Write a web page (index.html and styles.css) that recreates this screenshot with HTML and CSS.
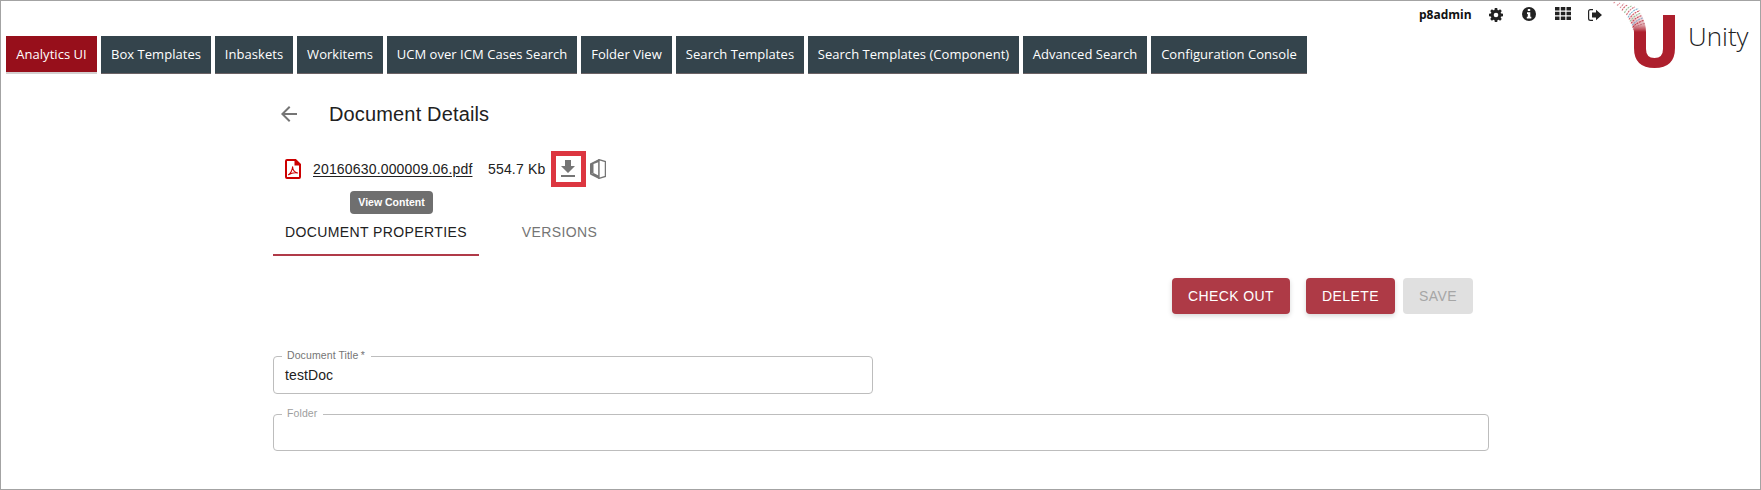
FILE: index.html
```html
<!DOCTYPE html>
<html lang="en">
<head>
<meta charset="utf-8">
<title>Document Details</title>
<link rel="stylesheet" href="styles.css">
</head>
<body>
<div class="app">
  <header class="top">
    <nav class="nav">
      <a class="nav-item active">Analytics UI</a>
      <a class="nav-item">Box Templates</a>
      <a class="nav-item">Inbaskets</a>
      <a class="nav-item">Workitems</a>
      <a class="nav-item">UCM over ICM Cases Search</a>
      <a class="nav-item">Folder View</a>
      <a class="nav-item">Search Templates</a>
      <a class="nav-item">Search Templates (Component)</a>
      <a class="nav-item">Advanced Search</a>
      <a class="nav-item">Configuration Console</a>
    </nav>
    <div class="user">
      <span class="user-name">p8admin</span>
      <svg class="gear" width="14" height="14" viewBox="0 0 14 14"><g fill="#222"><circle cx="7" cy="7" r="5.2"/><path d="M5.8 0h2.4l.5 3H5.3zM5.8 14h2.4l.5-3H5.3zM0 5.8v2.4l3 .5V5.3zM14 5.8v2.4l-3 .5V5.3z"/><path transform="rotate(45 7 7)" d="M5.8 0h2.4l.5 3H5.3zM5.8 14h2.4l.5-3H5.3zM0 5.8v2.4l3 .5V5.3zM14 5.8v2.4l-3 .5V5.3z"/></g><circle cx="7" cy="7" r="2.3" fill="#fff"/></svg>
      <svg class="info" width="14" height="14" viewBox="0 0 14 14"><circle cx="7" cy="7" r="7" fill="#222"/><path d="M5.8 2h2.4v2H5.8zM5 5.2h3.3v4.6h1v1.7H4.8V9.8h1V6.900H5z" fill="#fff"/></svg>
      <svg class="grid" width="16" height="13" viewBox="0 0 16 13"><path d="M0 0h4.500v3.500H0zM5.800 0h4.500v3.500H5.800zM11.500 0H16v3.500h-4.500zM0 4.750h4.500v3.500H0zM5.800 4.750h4.500v3.500H5.800zM11.500 4.750H16v3.500h-4.500zM0 9.500h4.500V13H0zM5.800 9.500h4.500V13H5.800zM11.500 9.500H16V13h-4.500z" fill="#222"/></svg>
      <svg class="exit" width="14" height="12" viewBox="0 0 14 12"><path d="M5 .6H2.500Q.6.600.6 2.500v7q0 1.900 1.900 1.900H5" fill="none" stroke="#222" stroke-width="1.200"/><path d="M4 3.500h4V.8L14 6l-6 5.200V8.500H4z" fill="#222"/></svg>
    </div>
    <div class="brand">
      <svg width="64" height="68" viewBox="0 0 64 68">
        <defs>
          <linearGradient id="fade" x1="0" y1="12" x2="0" y2="31" gradientUnits="userSpaceOnUse"><stop offset="0" stop-color="#ad1f2d" stop-opacity="0"/><stop offset=".6" stop-color="#ad1f2d" stop-opacity=".35"/><stop offset="1" stop-color="#ad1f2d"/></linearGradient>
        </defs>
        <path d="M15 12L27 8Q31 15 33 23Q34 27 34 31H22Q21 20 15 12Z" fill="url(#fade)"/>
        <path d="M22 31H34V48Q34 57 42.500 57Q51 57 51 48V14H63V47Q63 67 42.500 67Q22 67 22 47Z" fill="#ad1f2d"/>
        <g fill="none" stroke-width="1.100" stroke-dasharray="2 .8">
          <path d="M1.500 2l1.500-.8M5 4.500l3-2.500" stroke="#e2959d"/><path d="M8 7l4-4.500" stroke="#d98590"/>
          <path d="M10 9.500q2-4 5.500-5.500" stroke="#cf5966"/><path d="M12.500 12q2-5 7-7" stroke="#9ac29b"/>
          <path d="M14.500 14q3-6 8.500-8" stroke="#d26b78"/><path d="M16 16.500q3-6.500 10.500-9" stroke="#7fb3d0"/>
          <path d="M17 18.500q4-6.500 11-9" stroke="#cf5966"/><path d="M18 20.500q4-6 11-8.500" stroke="#9ac29b"/>
          <path d="M19 22.500q4-6 11-8" stroke="#c84b5a"/><path d="M20 24.500q4-5.500 11-7.500" stroke="#8fa5c8"/>
          <path d="M20.500 26.500q4-5 11-7" stroke="#bd3a49"/><path d="M21 28.500q5-4.500 12-6" stroke="#c4707c"/>
        </g>
      </svg>
      <span class="brand-name">Unity</span>
    </div>
  </header>
  <main class="page">
    <div class="heading">
      <svg width="24" height="24" viewBox="0 0 24 24"><path fill="#757575" d="M20 11H7.830l5.590-5.590L12 4l-8 8 8 8 1.410-1.410L7.830 13H20v-2z"/></svg>
      <h1>Document Details</h1>
    </div>
    <div class="file">
      <svg class="pdf" width="16" height="20" viewBox="0 0 16 20"><path d="M2 1h8.500L15 5.500V18q0 1-1 1H2q-1 0-1-1V2q0-1 1-1z" fill="#fff" stroke="#c00" stroke-width="2"/><path d="M9.500 1v5.500H15V5L11 1z" fill="#c00"/><path d="M3.500 15.800c1.700-.8 4-4.600 4.100-8 .1 3.200 2 5.500 5 6.200-3.200-.7-6.500.2-9.100 1.800z" fill="none" stroke="#c00" stroke-width="1.100" stroke-linejoin="round"/></svg>
      <div class="link-wrap"><a class="link">20160630.000009.06.pdf</a><span class="tip">View Content</span></div>
      <span class="size">554.7 Kb</span>
      <span class="mark"><svg width="14" height="17" viewBox="0 0 14 17"><path d="M4 0h6v6h4l-7 7-7-7h4zM0 15h14v2H0z" fill="#757575"/></svg></span>
      <svg class="office" width="16" height="20" viewBox="0 0 16 20"><path d="M0 4.500L9 0v3L3.500 5v9L0 15.500z" fill="#757575"/><path d="M0 15.500L3.500 14l5.500 2.800V20z" fill="#757575"/><path d="M9 .6l6.400 2v14.800L9 19.400zM8.800 1v18" fill="none" stroke="#757575" stroke-width="1.300"/></svg>
    </div>
    <div class="tabs"><span class="tab on">DOCUMENT PROPERTIES</span><span class="tab">VERSIONS</span></div>
    <div class="actions"><button class="btn checkout">CHECK OUT</button><button class="btn delete">DELETE</button><button class="btn save">SAVE</button></div>
    <fieldset class="field title"><legend>Document Title&thinsp;*</legend><div>testDoc</div></fieldset>
    <fieldset class="field folder"><legend>Folder</legend></fieldset>
  </main>
</div>
</body>
</html>
```
FILE: styles.css
```css
* { box-sizing: border-box; }
body { margin: 0; background: #fff; font-family: "Liberation Sans", Arial, sans-serif; color: #212121; }
svg { display: block; flex: none; }
.app { width: 1761px; height: 490px; border: 1px solid #a3a3a3; overflow: hidden; }
.top { display: flex; height: 89px; font-family: "Open Sans", sans-serif; }
.nav { display: grid; grid-template-columns: 91px 110px 78px 86px 190px 91px 128px 211px 124px 156px; align-items: start; column-gap: 4px; width: 1418px; padding: 35px 0 0 5px; }
.nav-item { height: 38px; background: #34444c; border-bottom: 1px solid #6b6265; color: #fff; font-size: 13px; line-height: 37px; letter-spacing: .04px; text-align: center; white-space: nowrap; }
.nav-item.active { background: #970f1b; border-bottom: 2px solid #d3d0d0; }
.user { display: flex; align-items: flex-start; width: 196px; padding-top: 5px; }
.user-name { width: 70px; font-size: 12px; line-height: 18px; font-weight: 700; color: #111; }
.gear { margin-top: 2px; }
.info { margin: 1px 0 0 19px; }
.grid { margin: 1px 0 0 19px; }
.exit { margin: 3px 0 0 17px; }
.brand { display: flex; }
.brand svg { margin-left: -3px; }
.brand-name { margin: 15px 0 0 12px; font-size: 26px; line-height: 40px; font-weight: 300; color: #222; }
.page { width: 1216px; margin-left: 272px; }
.heading { display: flex; align-items: center; height: 48px; padding-left: 4px; }
.heading h1 { margin: 0 0 0 28px; font-size: 20px; font-weight: 400; letter-spacing: .15px; }
.file { display: flex; height: 61px; align-items: center; padding-left: 12px; font-size: 14px; letter-spacing: .17px; }
.link-wrap { position: relative; width: 175px; margin-left: 12px; }
.link { text-decoration: underline; text-underline-offset: 2px; }
.tip { position: absolute; top: 30px; left: 37px; width: 83px; height: 23px; border-radius: 4px; background: #6f6f6f; color: #fff; font-size: 10.5px; font-weight: 700; line-height: 22px; letter-spacing: 0; text-align: center; }
.size { width: 63px; }
.mark { display: flex; align-items: center; width: 35px; height: 36px; padding-left: 5px; border: 5px solid #dc3640; }
.office { margin-left: 4px; }
.tabs { display: flex; height: 57px; }
.tab { width: 161px; height: 57px; padding-top: 25px; text-align: center; font-size: 14px; line-height: 16px; letter-spacing: .4px; color: #757575; }
.tab.on { width: 206px; color: #212121; border-bottom: 2px solid #b03a48; }
.actions { display: flex; padding: 22px 0 0 899px; }
.btn { height: 36px; padding: 0; border: 0; border-radius: 4px; background: #ae3a46; color: #fff; font: 14px "Liberation Sans", Arial, sans-serif; letter-spacing: .4px; box-shadow: 0 2px 5px rgba(0,0,0,.16); }
.checkout { width: 118px; margin-right: 16px; }
.delete { width: 89px; margin-right: 8px; }
.save { width: 70px; background: #e0e0e0; color: #a6a6a6; box-shadow: none; }
.field { min-width: 0; margin: 0; padding: 0 8px; border: 1px solid #bdbdbd; border-radius: 4px; }
.field legend { height: 12px; padding: 0 6px 0 5px; font-size: 10.5px; line-height: 10px; letter-spacing: .1px; color: #757575; }
.field div { padding-left: 3px; font-size: 14px; line-height: 26px; letter-spacing: .1px; }
.title { width: 600px; height: 44px; margin-top: 36px; }
.folder { width: 1216px; height: 43px; margin-top: 14px; }
.folder legend { color: #9e9e9e; }
```
